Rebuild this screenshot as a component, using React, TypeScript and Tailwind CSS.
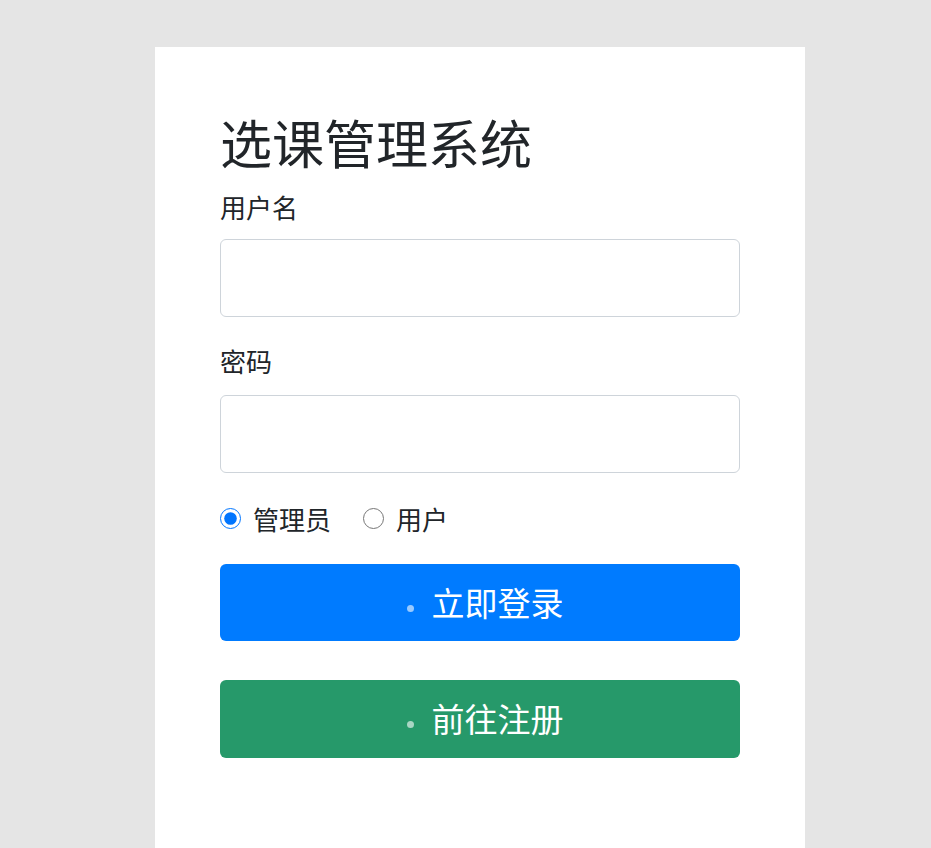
import React from "react";

export default function App() {
  const font = { fontFamily: '"Noto Sans CJK SC", "Noto Sans", sans-serif' };
  return (
    <div className="min-h-[848px] w-full bg-[#e5e5e5] pt-[47px]" style={font}>
      <div className="ml-[155px] w-[650px] min-h-[801px] bg-white px-[65px] pt-[64px] text-[#212529]">
        <h1 className="text-[52px] leading-[1.2] font-normal">选课管理系统</h1>
        <div className="mt-[18px] text-[26px] leading-[1.2]">用户名</div>
        <input className="mt-[16px] block h-[78px] w-[520px] rounded-[6px] border border-[#ced4da] bg-white px-3 outline-none" />
        <div className="mt-[28px] text-[26px] leading-[1.2]">密码</div>
        <input type="password" className="mt-[19px] block h-[78px] w-[520px] rounded-[6px] border border-[#ced4da] bg-white px-3 outline-none" />
        <div className="mt-[30px] flex items-center text-[26px] leading-[1.2]">
          <label className="flex items-center">
            <input type="radio" name="role" defaultChecked className="m-0 h-[21px] w-[21px] accent-[#0075ff]" />
            <span className="ml-[12px]">管理员</span>
          </label>
          <label className="ml-[32px] flex items-center">
            <input type="radio" name="role" className="m-0 h-[21px] w-[21px]" />
            <span className="ml-[12px]">用户</span>
          </label>
        </div>
        <button className="mt-[30px] flex h-[77px] w-[520px] items-center justify-center rounded-[6px] bg-[#007bff] pl-[10px] text-[33px] text-white">
          <span className="mr-[18px] mt-[12px] inline-block h-[7px] w-[7px] rounded-full bg-white/60" />
          立即登录
        </button>
        <button className="mt-[39px] flex h-[78px] w-[520px] items-center justify-center rounded-[6px] bg-[#26996a] pl-[10px] text-[33px] text-white">
          <span className="mr-[18px] mt-[12px] inline-block h-[7px] w-[7px] rounded-full bg-white/60" />
          前往注册
        </button>
      </div>
    </div>
  );
}
